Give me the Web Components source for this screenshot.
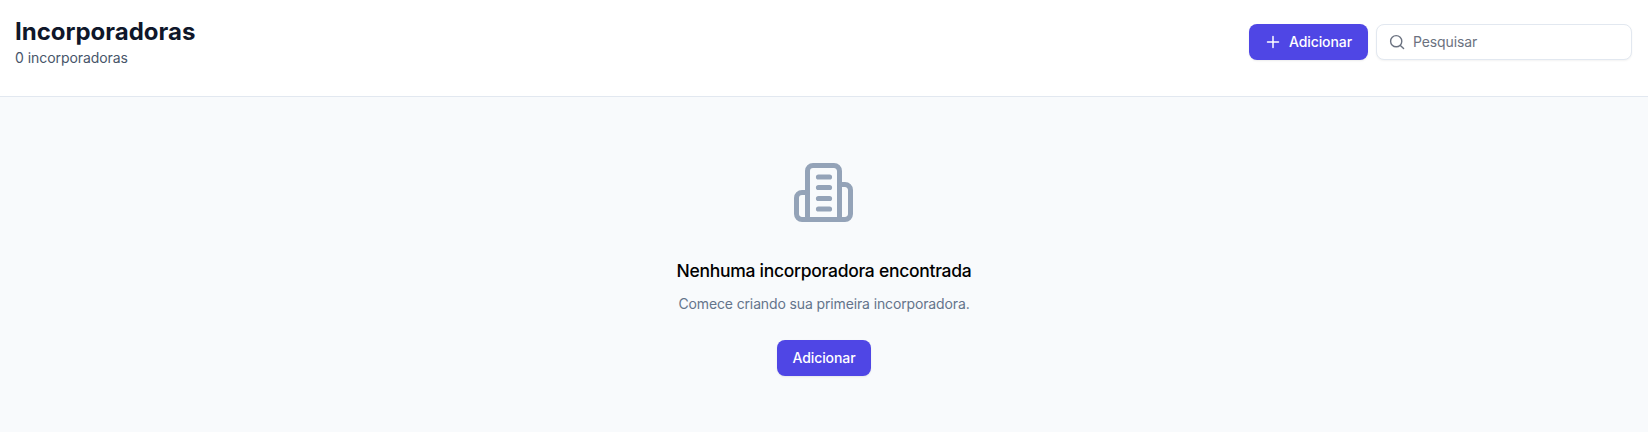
<!DOCTYPE html>
<html><head><meta charset="utf-8"><style>
html,body{margin:0;height:100%;background:#f8fafc;overflow:hidden}
body{font-family:Inter,"Liberation Sans",sans-serif}
</style></head><body>
<app-page>
<page-header slot="header" heading="Incorporadoras" sub="0 incorporadoras">
<app-button icon>Adicionar</app-button>
<search-box placeholder="Pesquisar"></search-box>
</page-header>
<empty-state heading="Nenhuma incorporadora encontrada" text="Comece criando sua primeira incorporadora."><app-button>Adicionar</app-button></empty-state>
</app-page>
<script>
function def(name,html,init){customElements.define(name,class extends HTMLElement{constructor(){super();const s=this.attachShadow({mode:'open'});s.innerHTML=html;}connectedCallback(){init&&init(this,this.shadowRoot)}})}
def('app-page',`<style>:host{display:flex;flex-direction:column;width:1648px;height:432px}</style><slot name="header"></slot><slot></slot>`);
def('page-header',`<style>:host{display:flex;justify-content:space-between;box-sizing:border-box;height:97px;padding:16px 16px 0 15px;background:#fff;border-bottom:1px solid #e2e8f0}
h1{margin:0;font:700 24px/32px Inter,sans-serif;color:#0f172a}
p{margin:0;font:400 14px/20px Inter,sans-serif;color:#475569;letter-spacing:-.06px}
.a{display:flex;align-items:flex-start;gap:8px;padding-top:8px}</style>
<div><h1></h1><p></p></div><div class="a"><slot></slot></div>`,(e,s)=>{s.querySelector('h1').textContent=e.getAttribute('heading');s.querySelector('p').textContent=e.getAttribute('sub')});
def('app-button',`<style>:host{display:inline-flex;align-items:center;justify-content:center;box-sizing:border-box;height:36px;padding:0 16px;gap:8px;background:#4f46e5;color:#fff;border-radius:8px;font:500 14px/20px Inter,sans-serif;letter-spacing:-.1px;box-shadow:0 1px 2px rgba(0,0,0,.08)}
:host([icon]){width:119px}svg{display:block}</style><span id="i"></span><slot></slot>`,(e,s)=>{const i=s.getElementById('i');if(e.hasAttribute('icon')){i.innerHTML='<svg width="16" height="16" viewBox="0 0 16 16" fill="none" stroke="#fff" stroke-width="1.5" stroke-linecap="round"><path d="M8 2.5v11M2.5 8h11"/></svg>'}else i.remove()});
def('search-box',`<style>:host{display:flex;align-items:center;box-sizing:border-box;width:256px;height:36px;padding:0 12px;gap:8px;background:#fff;border:1px solid #e2e8f0;border-radius:8px;box-shadow:0 1px 2px rgba(0,0,0,.05)}
span{font:400 14px/20px Inter,sans-serif;color:#6b7280;letter-spacing:-.1px}svg{display:block}</style>
<svg width="16" height="16" viewBox="0 0 16 16" fill="none" stroke="#6b7280" stroke-width="1.4" stroke-linecap="round"><circle cx="7.2" cy="7.2" r="5.6"/><path d="M11.4 11.4l3.2 3.2"/></svg><span></span>`,(e,s)=>{s.querySelector('span').textContent=e.getAttribute('placeholder')});
def('empty-state',`<style>:host{display:flex;flex-direction:column;align-items:center;padding-top:66px}
svg{display:block}
h2{margin:36px 0 0;font:500 17.5px/24px Inter,sans-serif;color:#000;letter-spacing:-.28px}
p{margin:11px 0 0;font:400 14px/20px Inter,sans-serif;color:#64748b;letter-spacing:-.13px}
.b{margin-top:26px}</style>
<svg width="60" height="60" viewBox="0 0 60 60" fill="none" stroke="#94a3b8" stroke-width="5" stroke-linejoin="round" stroke-linecap="round"><path d="M13.5 56.5V8a5.5 5.5 0 0 1 5.5-5.5h21a5.5 5.5 0 0 1 5.5 5.5v48.5"/><path d="M13.5 29.5H8a5.5 5.5 0 0 0-5.5 5.5v16a5.5 5.5 0 0 0 5.5 5.5h43a5.5 5.5 0 0 0 5.5-5.5V27a5.5 5.5 0 0 0-5.5-5.5h-5.5"/><path d="M24.5 14h11M24.5 24.5h11M24.5 35.5h11M24.5 46h11" stroke-width="5.2"/></svg>
<h2></h2><p></p><div class="b"><slot></slot></div>`,(e,s)=>{s.querySelector('h2').textContent=e.getAttribute('heading');s.querySelector('p').textContent=e.getAttribute('text')});
</script>
</body></html>
